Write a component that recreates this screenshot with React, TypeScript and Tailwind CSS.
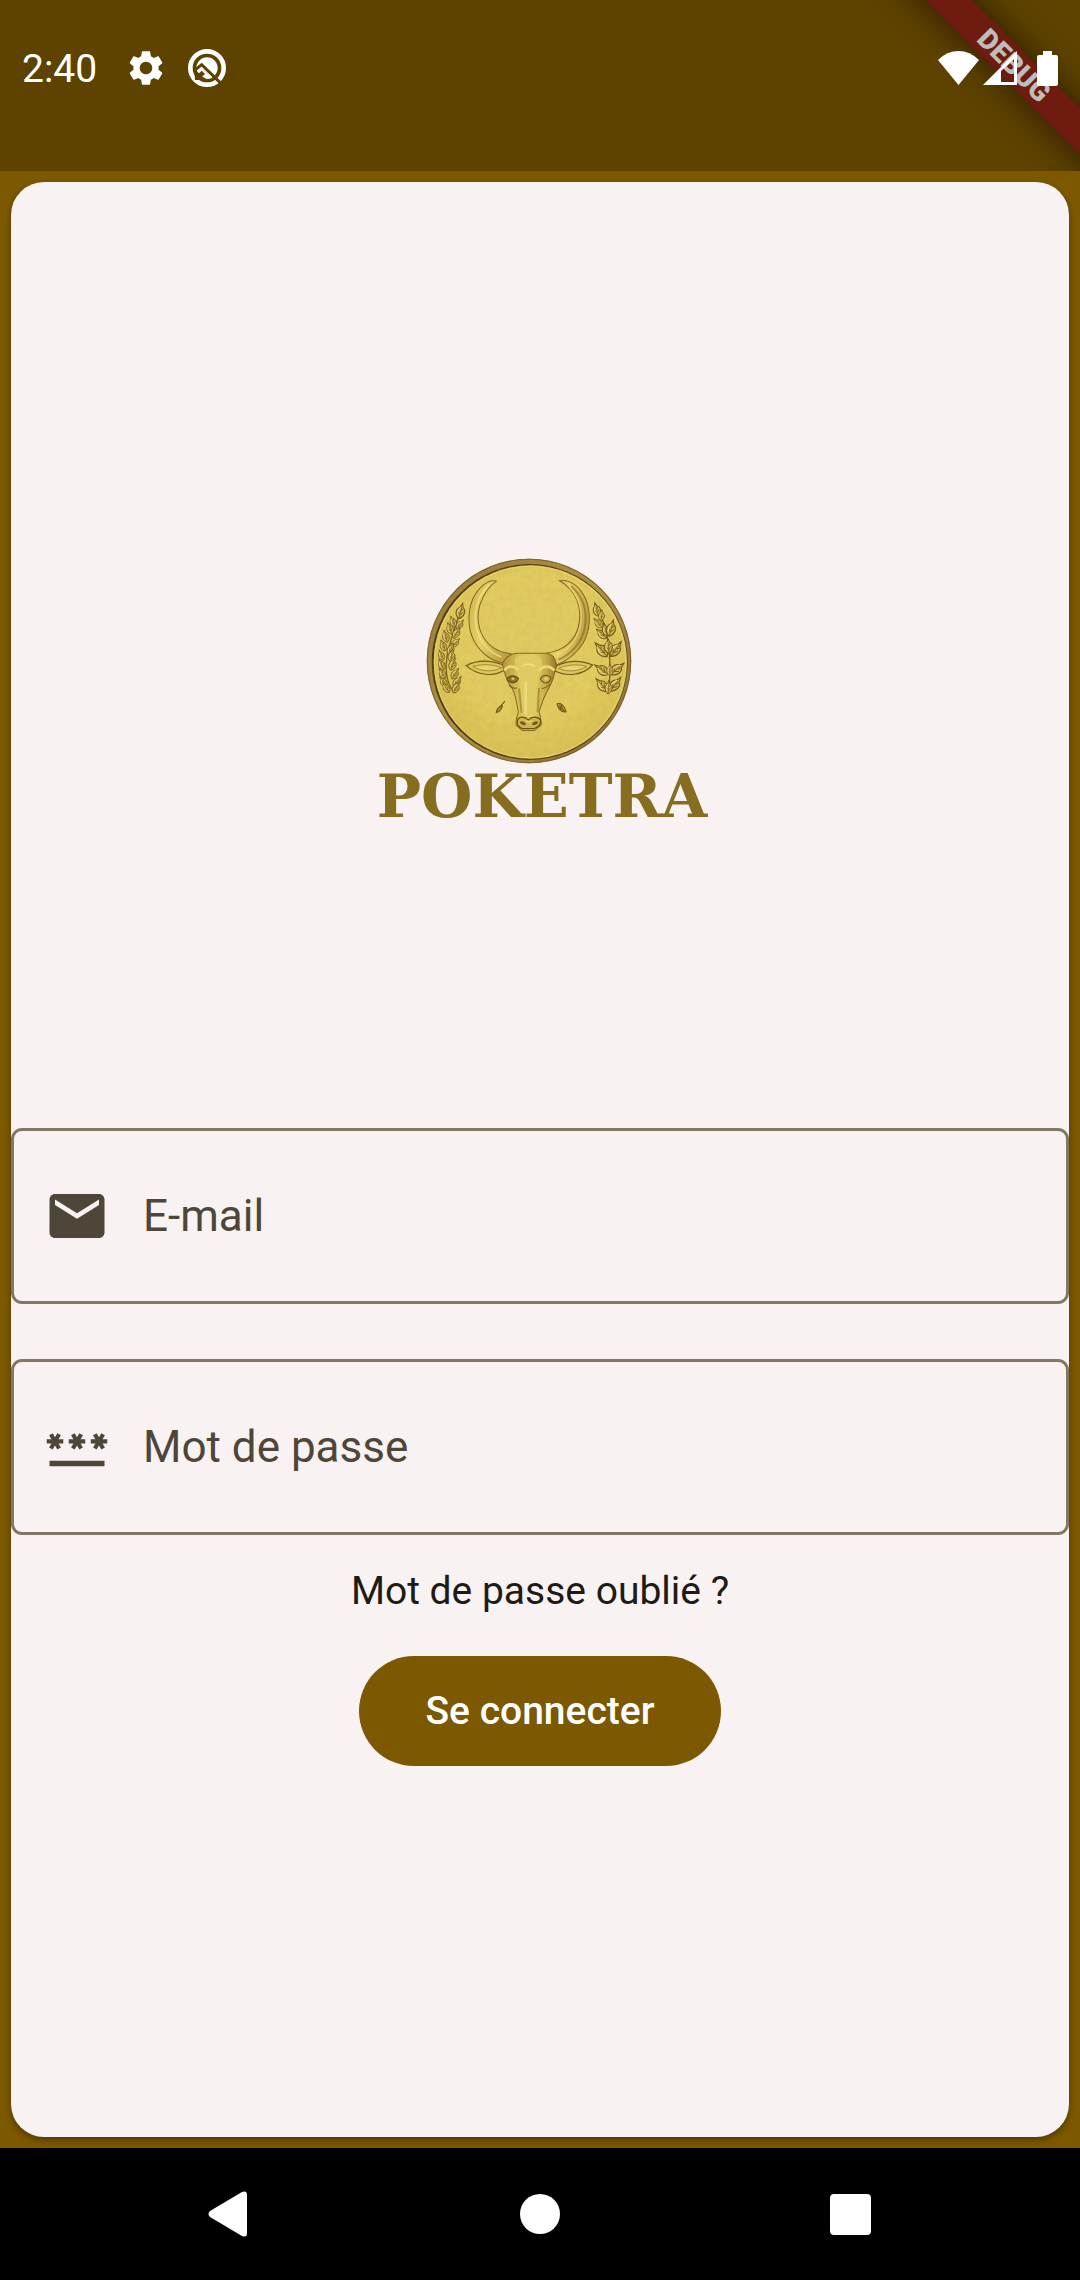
import React from "react";

type LeafProps = { x: number; y: number; angle: number; size: number };

function Leaf({ x, y, angle, size }: LeafProps) {
  return (
    <g transform={`translate(${x} ${y}) rotate(${angle}) scale(${size})`}>
      <path d="M0 0C-14 -8 -13 -24 -3 -30L0 -40L4 -29C14 -24 12 -8 0 0Z" fill="#cfb650" stroke="#73591a" strokeWidth="2.6" />
      <path d="M0 -2V-30M0 -10L-7 -19M0 -10L7 -19M0 -20L5 -26" fill="none" stroke="#80651d" strokeWidth="2.2" />
      <path d="M-5 -10C-8 -18 -6 -24 -2 -30" fill="none" stroke="#f0dd88" strokeWidth="2.4" />
    </g>
  );
}

const leftLeaves: LeafProps[] = [
  { x: 148, y: 232, angle: 14, size: 1.2 },
  { x: 138, y: 256, angle: -24, size: 0.9 },
  { x: 142, y: 262, angle: 36, size: 0.85 },
  { x: 128, y: 278, angle: -20, size: 0.95 },
  { x: 132, y: 290, angle: 30, size: 0.95 },
  { x: 114, y: 302, angle: -16, size: 0.95 },
  { x: 126, y: 316, angle: 44, size: 0.9 },
  { x: 108, y: 328, angle: -22, size: 0.9 },
  { x: 118, y: 340, angle: 20, size: 0.95 },
  { x: 102, y: 356, angle: -22, size: 0.85 },
  { x: 124, y: 362, angle: 8, size: 1 },
  { x: 104, y: 384, angle: -26, size: 0.9 },
  { x: 124, y: 386, angle: 18, size: 1 },
  { x: 108, y: 410, angle: -32, size: 0.9 },
  { x: 128, y: 412, angle: 30, size: 0.95 },
  { x: 112, y: 434, angle: -36, size: 0.9 },
  { x: 132, y: 434, angle: 38, size: 0.95 },
  { x: 120, y: 452, angle: -34, size: 0.9 },
  { x: 132, y: 454, angle: 26, size: 0.95 },
];

const rightLeaves: LeafProps[] = [
  { x: 566, y: 224, angle: -16, size: 1.05 },
  { x: 574, y: 238, angle: 4, size: 0.85 },
  { x: 578, y: 258, angle: -44, size: 0.95 },
  { x: 590, y: 290, angle: -48, size: 1.05 },
  { x: 594, y: 284, angle: -18, size: 1.05 },
  { x: 598, y: 284, angle: 14, size: 1.25 },
  { x: 592, y: 344, angle: -42, size: 1.35 },
  { x: 602, y: 344, angle: 36, size: 1.35 },
  { x: 597, y: 336, angle: -4, size: 1.15 },
  { x: 596, y: 398, angle: -56, size: 1.25 },
  { x: 602, y: 398, angle: 50, size: 1.3 },
  { x: 600, y: 402, angle: 0, size: 0.9 },
  { x: 592, y: 448, angle: -42, size: 1.25 },
  { x: 600, y: 448, angle: 38, size: 1.3 },
  { x: 596, y: 456, angle: 0, size: 1 },
];

function CoinLogo() {
  return (
    <svg viewBox="50 50 616 616" className="size-[206px]" role="img" aria-label="Zebu coin">
      <defs>
        <radialGradient id="face" cx="0.5" cy="0.42" r="0.6">
          <stop offset="0" stopColor="#dfca62" />
          <stop offset="0.6" stopColor="#e2cb5f" />
          <stop offset="1" stopColor="#d8bf53" />
        </radialGradient>
        <linearGradient id="rim" x1="0" y1="0" x2="1" y2="1">
          <stop offset="0" stopColor="#94763a" />
          <stop offset="0.5" stopColor="#ae9044" />
          <stop offset="1" stopColor="#846730" />
        </linearGradient>
        <linearGradient id="horn" x1="0" y1="0" x2="1" y2="0.4">
          <stop offset="0" stopColor="#cfb54e" />
          <stop offset="0.5" stopColor="#e6d06a" />
          <stop offset="1" stopColor="#bfa143" />
        </linearGradient>
        <linearGradient id="head" x1="0" y1="0" x2="1" y2="0">
          <stop offset="0" stopColor="#b3953a" />
          <stop offset="0.3" stopColor="#d8c056" />
          <stop offset="0.55" stopColor="#e6d16a" />
          <stop offset="0.8" stopColor="#c8ad48" />
          <stop offset="1" stopColor="#97792a" />
        </linearGradient>
        <filter id="grain" x="0" y="0" width="1" height="1">
          <feTurbulence type="fractalNoise" baseFrequency="0.05" numOctaves="4" seed="4" />
          <feColorMatrix values="0 0 0 0 0.5  0 0 0 0 0.38  0 0 0 0 0.08  0.9 0 0 0 -0.33" />
          <feComposite in2="SourceGraphic" operator="in" />
        </filter>
      </defs>

      <circle cx="358" cy="358" r="306" fill="url(#rim)" />
      <circle cx="358" cy="358" r="304" fill="none" stroke="#7a5f2a" strokeWidth="3" />
      <circle cx="360" cy="361" r="293" fill="#4f3a0d" />
      <circle cx="362" cy="361" r="289" fill="url(#face)" />
      <circle cx="361" cy="361" r="286" fill="none" stroke="#ecdc83" strokeWidth="3" opacity="0.6" />
      <circle cx="358" cy="358" r="306" fill="#000" filter="url(#grain)" opacity="0.45" />

      <path d="M156 192C140 260 118 300 112 350S116 430 134 452" fill="none" stroke="#7d6319" strokeWidth="4" />
      {leftLeaves.map((leaf, i) => (
        <Leaf key={i} {...leaf} />
      ))}
      <path d="M556 190C590 240 600 320 600 380S598 430 592 456" fill="none" stroke="#7d6319" strokeWidth="4" />
      {rightLeaves.map((leaf, i) => (
        <Leaf key={i} {...leaf} />
      ))}

      <path
        d="M260 119C236 112 206 138 190 172C174 212 174 262 194 298C212 332 244 358 282 364L304 336C264 332 236 312 220 284C202 252 202 210 216 178C226 152 242 132 260 119Z"
        fill="url(#horn)"
        stroke="#846821"
        strokeWidth="3"
      />
      <path
        d="M450 118C482 112 512 138 528 174C544 216 542 266 520 304C500 338 470 358 436 372L412 334C452 328 480 308 496 280C512 250 514 210 502 178C492 152 474 132 450 118Z"
        fill="url(#horn)"
        stroke="#846821"
        strokeWidth="3"
      />
      <path d="M240 130C204 160 190 214 202 264C212 302 240 334 276 346" fill="none" stroke="#f3e389" strokeWidth="5" opacity="0.7" />
      <path d="M484 134C522 168 534 214 524 262C514 304 484 338 446 354" fill="none" stroke="#7d6119" strokeWidth="6" opacity="0.55" />
      <path d="M478 136C510 172 520 216 510 258C500 296 474 326 440 340" fill="none" stroke="#f3e389" strokeWidth="4" opacity="0.6" />

      <path d="M170 372C204 354 246 356 282 370L284 386C252 406 204 402 170 372Z" fill="#dcc55a" stroke="#73591a" strokeWidth="3.5" />
      <path d="M190 374C220 366 250 368 276 378C248 392 216 390 190 374Z" fill="#e6d271" stroke="#977a2a" strokeWidth="2.5" />
      <path d="M548 370C512 354 472 358 440 372L436 388C468 404 516 404 548 370Z" fill="#dcc55a" stroke="#73591a" strokeWidth="3.5" />
      <path d="M530 374C500 366 470 370 446 380C474 392 504 390 530 374Z" fill="#e6d271" stroke="#977a2a" strokeWidth="2.5" />

      <path
        d="M278 366C290 344 302 336 322 335H406C426 336 436 346 440 366C436 392 430 418 418 438C404 462 396 484 388 510C392 524 396 540 394 550L374 566H338L320 550C318 536 322 522 326 512C322 484 318 458 308 440C292 420 284 396 278 366Z"
        fill="url(#head)"
        stroke="#846821"
        strokeWidth="3"
      />
      <path
        d="M318 350C334 334 378 334 396 352C398 374 390 398 384 420C380 456 380 488 376 520H336C334 484 332 450 330 420C322 396 312 366 318 350Z"
        fill="#e0ca62"
      />
      <path d="M340 372Q356 362 376 374" fill="none" stroke="#f0e08a" strokeWidth="5" />
      <path d="M348 420V516" fill="none" stroke="#efdf85" strokeWidth="8" opacity="0.7" />
      <path d="M284 386Q302 364 326 384M388 386Q410 364 434 386" fill="none" stroke="#ecd97c" strokeWidth="8" />
      <path d="M292 412C300 400 316 400 326 410C320 424 304 428 292 412Z" fill="#94772a" stroke="#65500f" strokeWidth="4" />
      <circle cx="310" cy="411" r="4" fill="#d8c468" />
      <path d="M392 412C398 398 416 398 424 408C420 426 402 430 392 412Z" fill="#c2a648" stroke="#755c1b" strokeWidth="3.5" />
      <circle cx="409" cy="411" r="6" fill="#dfca66" />
      <path d="M298 430Q310 444 322 438M396 440Q410 440 420 426" fill="none" stroke="#755c1b" strokeWidth="3" />
      <path d="M328 440L336 514M388 438L384 510" fill="none" stroke="#927528" strokeWidth="6" opacity="0.6" />
      <path d="M324 534C330 522 346 524 356 534C366 524 384 522 392 534C396 546 386 556 374 560H338C326 556 320 546 324 534Z" fill="#cfb54d" stroke="#65500f" strokeWidth="3.5" />
      <ellipse cx="340" cy="544" rx="9" ry="5" fill="#73591a" transform="rotate(20 340 544)" />
      <ellipse cx="376" cy="544" rx="9" ry="5" fill="#73591a" transform="rotate(-20 376 544)" />
      <path d="M348 536Q358 544 368 536" fill="none" stroke="#f0df88" strokeWidth="3" />

      <path d="M286 478L272 494M278 492C268 494 262 502 260 512C268 510 276 502 278 492Z" fill="#b3963b" stroke="#6b5214" strokeWidth="3" />
      <path d="M442 486C452 482 464 490 469 510C456 512 446 502 442 486ZM448 492L464 508M456 488L452 504" fill="#b3963b" stroke="#6b5214" strokeWidth="3" />
    </svg>
  );
}

function StatusBar() {
  return (
    <header className="relative flex h-[171px] items-start justify-between overflow-hidden bg-[#5d4200] text-white">
      <div className="absolute top-[49px] -right-[134px] flex h-[33px] w-[400px] rotate-45 items-center justify-center bg-[#6e1c10] text-[28px] leading-none font-black text-[#bdbdbd] shadow-[0_0_34px_rgba(0,0,0,0.6)]">
        DEBUG
      </div>
      <div className="flex h-[136px] items-center pl-[22px]">
        <time className="pt-0.5 text-[39px] leading-none">2:40</time>
        <svg viewBox="0 0 24 24" className="ml-7 size-[42px] fill-white" aria-label="Settings">
          <path d="M19.14 12.94c.04-.3.06-.61.06-.94 0-.32-.02-.64-.07-.94l2.03-1.58c.18-.14.23-.41.12-.61l-1.92-3.32c-.12-.22-.37-.29-.59-.22l-2.39.96c-.5-.38-1.03-.7-1.62-.94l-.36-2.54c-.04-.24-.24-.41-.48-.41h-3.84c-.24 0-.43.17-.47.41l-.36 2.54c-.59.24-1.13.57-1.62.94l-2.39-.96c-.22-.08-.47 0-.59.22L2.74 8.87c-.12.21-.08.47.12.61l2.03 1.58c-.05.3-.09.63-.09.94s.02.64.07.94l-2.03 1.58c-.18.14-.23.41-.12.61l1.92 3.32c.12.22.37.29.59.22l2.39-.96c.5.38 1.03.7 1.62.94l.36 2.54c.05.24.24.41.48.41h3.84c.24 0 .44-.17.47-.41l.36-2.54c.59-.24 1.13-.56 1.62-.94l2.39.96c.22.08.47 0 .59-.22l1.92-3.32c.12-.22.07-.47-.12-.61l-2.01-1.58zM12 15.6c-1.98 0-3.6-1.62-3.6-3.6s1.62-3.6 3.6-3.6 3.6 1.62 3.6 3.6-1.62 3.6-3.6 3.6z" />
        </svg>
        <svg viewBox="0 0 120 120" className="ml-5 size-10" aria-label="System notification">
          <circle cx="60" cy="60" r="50" fill="none" stroke="#fff" strokeWidth="14" />
          <circle cx="60" cy="60" r="32" fill="#fff" />
          <path d="M24 66L44 50L102 106" fill="none" stroke="#5d4200" strokeWidth="9" />
          <path d="M22 62L36 76L48 62L64 78L52 96H24Z" fill="#5d4200" />
          <path d="M34 68L46 60L76 90Q60 96 46 86L36 74Z" fill="#fff" />
          <path d="M34 78L44 68L54 78L44 88Z" fill="#5d4200" />
        </svg>
      </div>
      <div className="relative flex h-[136px] items-center pr-[22px]">
        <svg viewBox="0 0 41 34" className="h-[34px] w-[41px] fill-white" aria-label="Wi-Fi">
          <path d="M0 9Q9 0 20.500 0T41 9L20.500 34Z" />
        </svg>
        <svg viewBox="0 0 34 34" className="ml-1 size-[34px] fill-white" aria-label="Signal">
          <path fillRule="evenodd" d="M34 0V34H0ZM31 8L18 20V31H31Z" />
        </svg>
        <svg viewBox="0 0 21 35" className="ml-5 h-[35px] w-[21px] fill-white" aria-label="Battery">
          <path d="M6 0H15V4H19Q21 4 21 6V33Q21 35 19 35H2Q0 35 0 33V6Q0 4 2 4H6Z" />
        </svg>
      </div>
    </header>
  );
}

type FieldProps = { id: string; type: string; label: string; icon: React.ReactNode };

function Field({ id, type, label, icon }: FieldProps) {
  return (
    <div className="flex h-[176px] w-full items-center gap-[33px] rounded-[11px] border-3 border-[#827665] px-[30px] text-[#4e4639]">
      <label htmlFor={id} aria-label={label} className="shrink-0">
        {icon}
      </label>
      <input
        id={id}
        type={type}
        placeholder={label}
        aria-label={label}
        className="h-full min-w-0 flex-1 bg-transparent text-[44px] outline-none placeholder:text-[#4e4639]"
      />
    </div>
  );
}

function NavBar() {
  return (
    <nav className="flex h-[132px] items-center justify-center gap-[220px] bg-black">
      <button type="button" aria-label="Back" className="flex size-[90px] items-center justify-center pr-1.5">
        <svg viewBox="0 0 39 46" className="h-[46px] w-[39px] fill-white">
          <path d="M34 1Q39 -1 39 4V42Q39 47 34 45L2 26Q-1 23 2 20Z" />
        </svg>
      </button>
      <button type="button" aria-label="Home" className="flex size-[90px] items-center justify-center">
        <span className="size-10 rounded-full bg-white" />
      </button>
      <button type="button" aria-label="Recent apps" className="flex size-[90px] items-center justify-center">
        <span className="size-[41px] rounded-sm bg-white" />
      </button>
    </nav>
  );
}

export default function App() {
  return (
    <div className="flex min-h-screen flex-col bg-[#7c5800] font-[Roboto,sans-serif]">
      <StatusBar />
      <main className="flex flex-1 flex-col p-[11px]">
        <form
          onSubmit={(e) => e.preventDefault()}
          className="flex flex-1 flex-col items-center justify-center rounded-[33px] bg-[#f8f2f2] shadow-[0_3px_6px_rgba(0,0,0,0.35)]"
        >
          <div className="flex flex-col items-center pt-1 pb-[298px]">
            <div className="pr-[22px]">
              <CoinLogo />
            </div>
            <h1 className="pl-1 font-['DejaVu_Serif',serif] text-[59px] leading-[66px] font-bold text-[#866d20]">POKETRA</h1>
          </div>
          <div className="flex w-full flex-col gap-[55px]">
            <Field
              id="email"
              type="email"
              label="E-mail"
              icon={
                <svg viewBox="0 0 24 24" className="size-[66px] fill-current">
                  <path d="M20 4H4c-1.100 0-1.990.9-1.990 2L2 18c0 1.100.9 2 2 2h16c1.100 0 2-.9 2-2V6c0-1.100-.9-2-2-2zm0 4l-8 5-8-5V6l8 5 8-5v2z" />
                </svg>
              }
            />
            <Field
              id="password"
              type="password"
              label="Mot de passe"
              icon={
                <svg viewBox="0 0 24 24" className="size-[66px] fill-current">
                  <path d="M2 17h20v2H2v-2zm1.150-4.050L4 11.470l.85 1.480 1.300-.75-.85-1.480H7v-1.500H5.300l.85-1.470L4.850 7 4 8.470 3.150 7l-1.300.75.85 1.470H1v1.500h1.700l-.85 1.480 1.300.75zm6.700-.75l1.300.75.85-1.480.85 1.480 1.300-.75-.85-1.480H15v-1.500h-1.700l.85-1.470-1.300-.75L12 8.470 11.150 7l-1.300.75.85 1.470H9v1.500h1.700l-.85 1.480zM23 9.220h-1.700l.85-1.470-1.300-.75L20 8.470 19.150 7l-1.300.75.85 1.470H17v1.500h1.700l-.85 1.480 1.300.75.85-1.480.85 1.480 1.300-.75-.85-1.480H23v-1.500z" />
                </svg>
              }
            />
          </div>
          <a href="#" className="mt-[34px] text-[39px] leading-[44px] text-[#1e1b16]">
            Mot de passe oublié ?
          </a>
          <button
            type="submit"
            className="mt-[43px] h-[110px] rounded-full bg-[#7c5800] px-[66px] pt-0.5 text-[39px] font-medium text-white"
          >
            Se connecter
          </button>
        </form>
      </main>
      <NavBar />
    </div>
  );
}
